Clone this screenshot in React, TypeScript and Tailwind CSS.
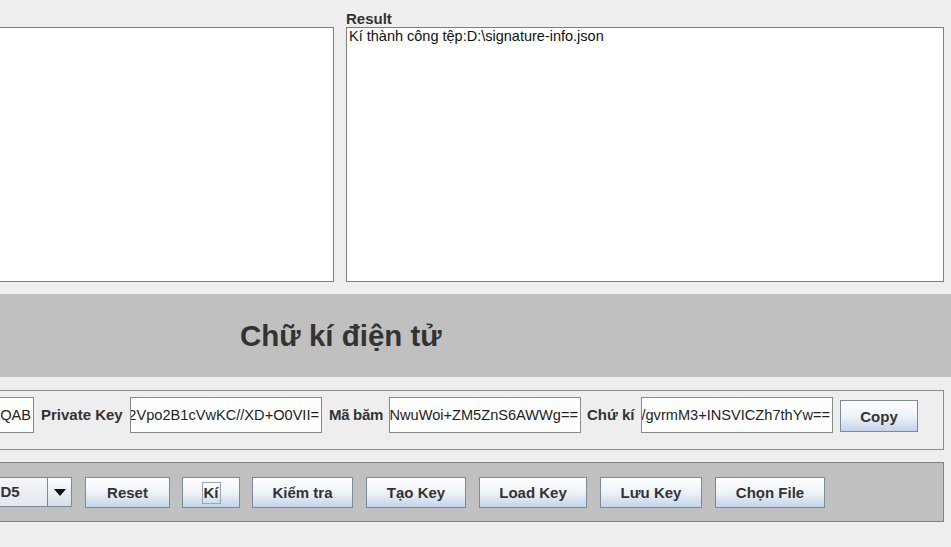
import React from "react";

const btn =
  "h-[31px] shrink-0 flex items-center justify-center border border-[#7a8a99] bg-gradient-to-b from-[#ffffff] via-[#eef3f9] to-[#c3d4ea] text-[15px] font-bold text-[#333333] pt-[2px]";

function Field({ text, width }: { text: string; width: string }) {
  return (
    <div
      className={`${width} h-[36px] shrink-0 border border-[#8a8a8a] bg-white flex items-center justify-end overflow-hidden pr-[2px]`}
    >
      <span className="whitespace-nowrap text-[14.6px] text-[#222222] leading-[18px]">{text}</span>
    </div>
  );
}

export default function App() {
  return (
    <div className="w-[951px] h-[547px] bg-[#eeeeee] overflow-hidden font-['Liberation_Sans',Arial,sans-serif]">
      {/* top text areas */}
      <div className="flex pt-[11px] -ml-[20px] w-[964px]">
        <div className="w-[354px] shrink-0 flex flex-col">
          <div className="h-[16px]" />
          <div className="h-[255px] border border-[#7f7f7f] bg-white" />
        </div>
        <div className="ml-[12px] w-[598px] shrink-0 flex flex-col">
          <div className="h-[16px] text-[15px] leading-[15px] font-bold text-[#333333]">Result</div>
          <div className="h-[255px] border border-[#7f7f7f] bg-white pl-[2px] text-[14.5px] leading-[17px] text-[#111111]">
            Kí thành công tệp:D:\signature-info.json
          </div>
        </div>
      </div>

      {/* title band */}
      <div className="mt-[12px] h-[83px] bg-[#c0c0c0] flex items-center pl-[240px]">
        <span className="text-[29.5px] leading-[30px] font-bold text-[#333333]">Chữ kí điện tử</span>
      </div>

      {/* key panel */}
      <div className="mt-[13px] -ml-[20px] w-[964px] h-[60px] border border-[#8c8c8c] flex items-start pt-[6px]">
        <Field width="w-[53px]" text="BIjANBgkqhkiG9w0BAQEFAAOCAQ8AMIIBCgKCAQEAwIDAQAB" />
        <div className="ml-[7px] w-[82px] shrink-0 h-[36px] flex items-center text-[15px] font-bold text-[#333333] whitespace-nowrap">
          Private Key
        </div>
        <Field width="w-[192px] ml-[7px]" text="MIIEvQIBADANBgkqhkiG9wjF2Vpo2B1cVwKC//XD+O0VII=" />
        <div className="ml-[7px] w-[54px] shrink-0 h-[36px] flex items-center text-[15px] font-bold text-[#333333] whitespace-nowrap tracking-[-0.3px]">
          Mã băm
        </div>
        <Field width="w-[192px] ml-[6px]" text="x8Yt3kQ1NwuWoi+ZM5ZnS6AWWg==" />
        <div className="ml-[6px] w-[47px] shrink-0 h-[36px] flex items-center text-[15px] font-bold text-[#333333] whitespace-nowrap">
          Chứ kí
        </div>
        <Field width="w-[192px] ml-[7px]" text="Qm9aLk2vF/gvrmM3+INSVICZh7thYw==" />
        <div className={`${btn} ml-[7px] w-[78px] h-[32px] mt-[3px]`}>Copy</div>
      </div>

      {/* buttons panel */}
      <div className="mt-[12px] -ml-[20px] w-[964px] h-[60px] border border-[#808080] bg-[#c0c0c0] flex items-center">
        <div className="w-[91px] h-[30px] shrink-0 flex border border-[#7a8a99] bg-gradient-to-b from-[#f4f6f9] to-[#e3e8ee]">
          <div className="flex-1 flex items-center pl-[6px] text-[15px] font-bold text-[#333333] whitespace-nowrap overflow-hidden">
            MD5
          </div>
          <div className="w-[24px] h-full border-l border-[#7a8a99] flex items-center justify-center bg-gradient-to-b from-[#ffffff] to-[#d4deea]">
            <svg width="12" height="7" viewBox="0 0 12 7">
              <polygon points="0,0 12,0 6,7" fill="#111111" />
            </svg>
          </div>
        </div>
        <div className={`${btn} ml-[13px] w-[85px]`}>Reset</div>
        <div className={`${btn} ml-[12px] w-[58px]`}>
          <span className="border border-[#96a6bd] px-[1px] leading-[20px]">Kí</span>
        </div>
        <div className={`${btn} ml-[12px] w-[101px]`}>Kiểm tra</div>
        <div className={`${btn} ml-[13px] w-[100px]`}>Tạo Key</div>
        <div className={`${btn} ml-[13px] w-[108px]`}>Load Key</div>
        <div className={`${btn} ml-[13px] w-[102px]`}>Lưu Key</div>
        <div className={`${btn} ml-[13px] w-[110px]`}>Chọn File</div>
      </div>
    </div>
  );
}
